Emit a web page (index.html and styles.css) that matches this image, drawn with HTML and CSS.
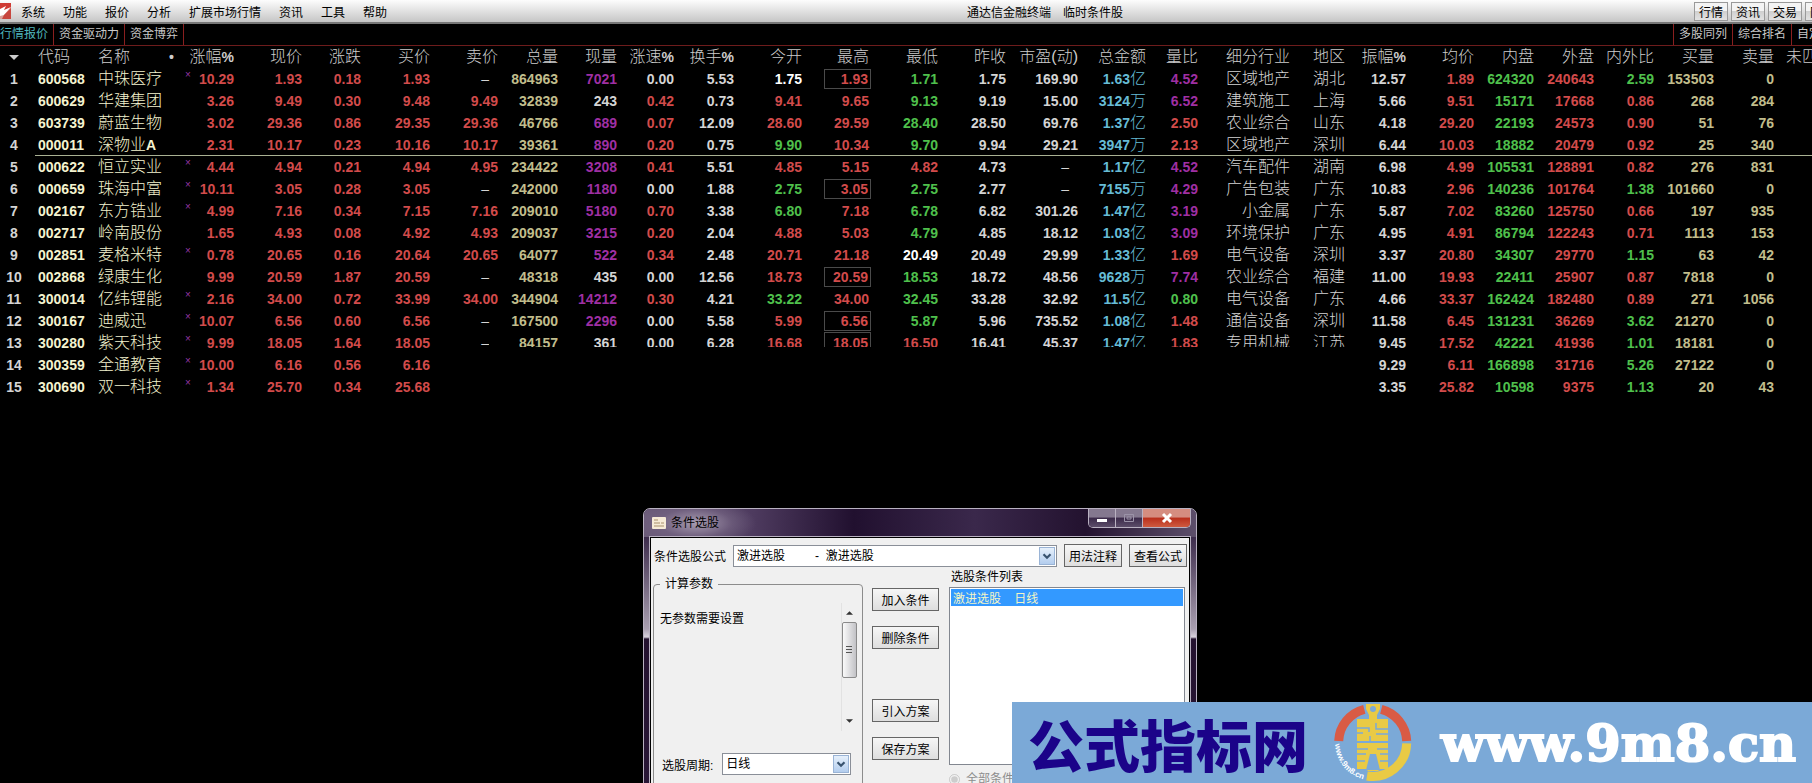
FILE: index.html
```html
<!DOCTYPE html>
<html lang="zh-CN">
<head>
    <meta charset="UTF-8">
    <meta name="viewport" content="width=device-width, initial-scale=1.0">
    <title>通达信金融终端</title>
    <link rel="stylesheet" href="styles.css">
</head>
<body>
    <header class="menu-bar">
        <svg class="app-icon" viewBox="0 0 11 16">
            <rect width="11" height="16" fill="#d9a09a"/>
            <path d="M0 0h11v5L5 9 0 8z" fill="#cf3b34"/>
            <path d="M0 6l6-3-2 4 7-3-7 8-4 1z" fill="#fff"/>
            <path d="M4 12l7-7v11H2z" fill="#c8473f"/>
        </svg>
        <nav class="menu">
            <a href="#">系统</a>
            <a href="#">功能</a>
            <a href="#">报价</a>
            <a href="#">分析</a>
            <a href="#">扩展市场行情</a>
            <a href="#">资讯</a>
            <a href="#">工具</a>
            <a href="#">帮助</a>
        </nav>
        <div class="app-title"><span>通达信金融终端</span><span>临时条件股</span></div>
        <div class="menu-buttons">
            <button>行情</button>
            <button>资讯</button>
            <button>交易</button>
            <button>网站</button>
        </div>
    </header>

    <nav class="tabs">
        <a href="#" class="active">行情报价</a>
        <a href="#">资金驱动力</a>
        <a href="#">资金博弈</a>
        <div class="tabs-right">
            <a href="#">多股同列</a>
            <a href="#">综合排名</a>
            <a href="#">自定</a>
        </div>
    </nav>

    <main>
        <table class="quotes">
            <colgroup id="cols"></colgroup>
            <thead><tr id="head"></tr></thead>
            <tbody id="rows"></tbody>
        </table>
    </main>

    <section class="dialog">
        <div class="dialog-title">
            <svg class="dialog-icon" viewBox="0 0 14 12">
                <rect width="14" height="12" rx="1" fill="#f6ead6"/>
                <path d="M2 3h4M2 6h6M2 9h10M9 6h3" stroke="#a8906c" stroke-width="1"/>
            </svg>
            <h2>条件选股</h2>
            <div class="window-buttons">
                <button aria-label="最小化"><svg viewBox="0 0 12 12"><path d="M1 7h10v3H1z" fill="#fff"/></svg></button>
                <button aria-label="最大化"><svg viewBox="0 0 12 12"><path d="M1.500 2.500h9v7h-9zM4 5h4v2H4z" fill="none" stroke="#9b93a8" stroke-width="1"/></svg></button>
                <button class="close" aria-label="关闭"><svg viewBox="0 0 12 12"><path d="M2 2l8 8M10 2l-8 8" stroke="#fff" stroke-width="3"/></svg></button>
            </div>
        </div>
        <div class="dialog-body">
            <div class="formula-row">
                <label for="formula">条件选股公式</label>
                <div class="combo formula">
                    <select id="formula"><option>激进选股&nbsp;&nbsp;&nbsp;&nbsp;&nbsp;&nbsp;&nbsp;&nbsp;&nbsp;-&nbsp; 激进选股</option></select>
                    <svg class="arrow" viewBox="0 0 16 18"><path d="M4 7l4 4 4-4" fill="none" stroke="#39536f" stroke-width="2.500"/></svg>
                </div>
                <button class="btn">用法注释</button>
                <button class="btn">查看公式</button>
            </div>
            <div class="dialog-cols">
                <fieldset class="params">
                    <legend>计算参数</legend>
                    <div class="params-area">
                        <p>无参数需要设置</p>
                        <div class="scrollbar">
                            <svg viewBox="0 0 8 4"><path d="M0 4l4-4 4 4z" fill="#333"/></svg>
                            <div class="thumb"></div>
                            <svg class="down" viewBox="0 0 8 4"><path d="M0 0l4 4 4-4z" fill="#333"/></svg>
                        </div>
                    </div>
                    <div class="period-row">
                        <label for="period">选股周期:</label>
                        <div class="combo">
                            <select id="period"><option>日线</option></select>
                            <svg class="arrow" viewBox="0 0 16 18"><path d="M4 7l4 4 4-4" fill="none" stroke="#39536f" stroke-width="2.500"/></svg>
                        </div>
                    </div>
                </fieldset>
                <div class="actions">
                    <button class="btn">加入条件</button>
                    <button class="btn">删除条件</button>
                    <button class="btn second">引入方案</button>
                    <button class="btn">保存方案</button>
                </div>
                <div class="conditions">
                    <label for="conditions">选股条件列表</label>
                    <select id="conditions" size="9">
                        <option selected>激进选股&nbsp;&nbsp;&nbsp;&nbsp;日线</option>
                    </select>
                    <label class="radio"><input type="radio" name="mode" checked disabled>全部条件相与</label>
                </div>
            </div>
        </div>
    </section>

    <aside class="banner">
        <strong class="banner-name">公式指标网</strong>
        <svg class="banner-logo" viewBox="0 0 78 79">
            <g fill="none" stroke-width="9">
                <path d="M4.700 38A34 34 0 0 1 30.300 6.400M47.300 6.400A34 34 0 0 1 72.700 38" stroke="#d95b45"/>
                <path d="M72.700 40.300A34 34 0 0 1 33 73" stroke="#e9ca45"/>
            </g>
            <path d="M32 1h14v5l-3 6v4h11v22H23V16h12v-4l-3-6z" fill="#e9ca45"/>
            <path d="M23 40h31v26h-8l-2 2H34l-2-2h-9z" fill="#e9ca45"/>
            <circle cx="39" cy="6" r="3" fill="#7ba9d7"/>
            <path d="M23 25h12v4M23 30h6M36 33v5M42 20v6h12M42 31h12M23 46h11M43 46h11M23 51h9M46 51h8M23 58h8M46 58h8" fill="none" stroke="#7ba9d7" stroke-width="1.500"/>
            <path d="M36 51h6l4 16H32z" fill="#7ba9d7"/>
            <path id="ring" d="M1 41A38 38 0 0 0 33 77" fill="none"/>
            <text class="ring-text"><textPath href="#ring">www.9m8.cn</textPath></text>
        </svg>
        <strong class="banner-url">www.9m8.cn</strong>
    </aside>

    <script src="script.js"></script>
</body>
</html>
```
FILE: styles.css
```css
* {
    box-sizing: border-box;
}
body {
    margin: 0;
    min-height: 100vh;
    position: relative;
    overflow: hidden;
    background: #000;
    color: #c8c8c8;
    font-family: "Liberation Sans", "Noto Sans CJK SC", sans-serif;
    font-size: 12px;
}
a {
    color: inherit;
    text-decoration: none;
    white-space: nowrap;
}
button, select, input {
    font: inherit;
    margin: 0;
    padding: 0;
}

/* menu */
.menu-bar {
    display: flex;
    align-items: center;
    height: 24px;
    color: #000;
    background: linear-gradient(#fdfdfd, #c6c6c6);
    border-bottom: 2px solid #777;
    overflow: hidden;
}
.app-icon {
    width: 11px;
    height: 16px;
}
.menu {
    display: flex;
    gap: 18px;
    margin-left: 10px;
}
.app-title {
    display: flex;
    gap: 12px;
    margin-left: 32%;
    white-space: nowrap;
}
.menu-buttons {
    display: flex;
    gap: 3px;
    margin-left: auto;
    margin-right: -27px;
}
.menu-buttons button {
    width: 34px;
    height: 19px;
    background: linear-gradient(#f4f4f4 45%, #d0d0d0 50%, #e2e2e2);
    border: 1px solid #999;
}

/* tabs */
.tabs {
    display: flex;
    height: 22px;
    line-height: 20px;
    border-bottom: 1px solid #6e1c1c;
    overflow: hidden;
}
.tabs a {
    padding: 0 5px;
    border-right: 1px solid #8a1f1f;
}
.tabs a.active {
    padding-left: 0;
    color: #4fb5bd;
}
.tabs-right {
    display: flex;
    margin-left: auto;
    margin-right: -15px;
    border-left: 1px solid #8a1f1f;
}

/* quotes */
.quotes {
    width: 100%;
    table-layout: fixed;
    border-collapse: collapse;
}
.quotes th, .quotes td {
    height: 22px;
    padding: 0 4px 0 0;
    line-height: 20px;
    text-align: right;
    white-space: nowrap;
    overflow: hidden;
}
.quotes th {
    color: #cdcdcd;
    font-size: 16px;
    font-weight: 300;
}
.quotes th b {
    font-size: 14px;
    font-weight: 700;
}
.quotes td {
    font-size: 14px;
    font-weight: bold;
}
.quotes td.cn, .quotes td i {
    font-size: 16px;
    font-style: normal;
    font-weight: 300;
}
.quotes td.cn b {
    font-size: 14px;
    font-weight: 700;
}
.quotes th.no, .quotes td.no {
    padding-right: 7px;
    text-align: center;
}
.quotes th.code, .quotes td.code {
    padding-left: 3px;
    text-align: left;
    overflow: visible;
}
.quotes th.name, .quotes td.name {
    padding-left: 4px;
    text-align: left;
}
.quotes th.last {
    padding-left: 8px;
    text-align: left;
}
.quotes td.name, .quotes td.code {
    color: #f4f3cf;
}
.name-head {
    display: flex;
    justify-content: space-between;
    padding-right: 2px;
}
.quotes td.mark {
    color: #9436a4;
    font-size: 10px;
    line-height: 14px;
    font-weight: normal;
    text-align: center;
    vertical-align: top;
    padding: 0;
}
.quotes tr.picked td:not(.no) {
    box-shadow: inset 0 -1px #a9b193;
}
.sort {
    width: 10px;
    height: 5px;
    vertical-align: middle;
}
.red { color: #d24b4b; }
.green { color: #4fc04c; }
.white { color: #fff; }
.gray { color: #d4d4d4; }
.yellow { color: #c1bd8c; }
.purple { color: #9f2fa3; }
.cyan { color: #66bcd6; }
.quotes td.dash {
    padding-right: 13px;
    font-weight: normal;
}
.quotes td.limit {
    padding-right: 2px;
}
.limit span {
    display: block;
    width: 47px;
    height: 20px;
    margin-left: auto;
    padding-right: 2px;
    line-height: 18px;
    border: 1px solid #4a4a4a;
}
.quotes td.cut {
    vertical-align: top;
}
.cut span {
    display: block;
    height: 15px;
    line-height: 22px;
    overflow: hidden;
}
.limit.cut span {
    border-bottom: 0;
    line-height: 20px;
}

/* dialog */
.dialog {
    position: absolute;
    left: 643px;
    top: 508px;
    width: 554px;
    padding: 0 6px;
    color: #000;
    background: linear-gradient(#4b3c5c, #3d2c4c 28px, #a99fb0 120px, #d8d2dc 128px, #24122f 130px, #2a1838);
    border: 1px solid #b9b1c1;
    border-radius: 7px 7px 0 0;
}
.dialog-title {
    display: flex;
    align-items: center;
    height: 28px;
    margin: 0 -6px;
    padding-left: 8px;
    border-radius: 6px 6px 0 0;
    background: radial-gradient(60px 24px at 52px 14px, #a79bb0, rgba(120, 104, 134, 0.6) 60%, transparent), linear-gradient(90deg, #6b5b79, #4d3a5e 20%, #21102f 38%, #3a284b 60%, #23122f 80%, #5d4f6b);
}
.dialog-icon {
    width: 14px;
    height: 12px;
}
.dialog-title h2 {
    margin: 0 0 0 5px;
    font-size: 12px;
    font-weight: normal;
    line-height: 24px;
}
.window-buttons {
    display: flex;
    align-self: flex-start;
    height: 19px;
    margin-left: auto;
    margin-right: 5px;
    border: 1px solid #b9b1c1;
    border-top: 0;
    border-radius: 0 0 5px 5px;
    overflow: hidden;
}
.window-buttons button {
    width: 27px;
    border: 0;
    border-right: 1px solid #b9b1c1;
    background: linear-gradient(#84788f 45%, #3b2a4a 50%, #5c4d69);
}
.window-buttons button.close {
    width: 47px;
    border-right: 0;
    background: linear-gradient(#d58d80 45%, #b92f1c 50%, #cf5a40);
}
.window-buttons svg {
    width: 12px;
    height: 12px;
    display: block;
    margin: 0 auto;
}
.dialog-body {
    padding: 6px 2px 24px 2px;
    background: #f0f0f0;
    border: 1px solid #000;
    outline: 1px solid #b9b1c1;
}
.formula-row {
    display: flex;
    align-items: center;
    gap: 7px;
}
.formula-row label {
    margin-left: 1px;
}
.btn {
    height: 23px;
    padding: 0 4px;
    background: linear-gradient(#f6f6f6, #dedede);
    border: 1px solid #666;
    white-space: nowrap;
}
.combo {
    position: relative;
    flex: 1;
    height: 22px;
}
.combo select {
    width: 100%;
    height: 22px;
    padding-left: 3px;
    appearance: none;
    color: #000;
    background: #fff;
    border: 1px solid #8a8f98;
    border-radius: 0;
}
.combo .arrow {
    position: absolute;
    right: 2px;
    top: 2px;
    width: 16px;
    height: 18px;
    background: linear-gradient(#e6f0fb, #b3cdee);
    border: 1px solid #9ab4d6;
    pointer-events: none;
}
.dialog-cols {
    display: flex;
    gap: 9px;
}
.params {
    width: 210px;
    min-width: 0;
    margin: 8px 0 0 0;
    padding: 0 6px 7px;
    border: 1px solid #8c8c8c;
    border-radius: 4px;
}
.params legend {
    padding: 0 5px;
    line-height: 18px;
}
.params-area {
    display: flex;
    justify-content: space-between;
    height: 128px;
    margin-top: 10px;
}
.params-area p {
    margin: 7px 0 0;
    line-height: 18px;
}
.scrollbar {
    display: flex;
    flex-direction: column;
    align-items: center;
    width: 15px;
    padding: 8px 0;
    border-left: 1px solid #e2e2e2;
}
.scrollbar svg {
    width: 7px;
    height: 4px;
}
.scrollbar .down {
    margin-top: auto;
}
.thumb {
    width: 15px;
    height: 56px;
    margin-top: 7px;
    border: 1px solid #8a8a8a;
    border-radius: 2px;
    background: repeating-linear-gradient(#555 0 1px, transparent 1px 3px) center / 6px 9px no-repeat, linear-gradient(90deg, #fafafa, #c2c2c6);
}
.period-row {
    display: flex;
    align-items: center;
    gap: 9px;
    margin: 22px 5px 0 2px;
}
.actions {
    display: flex;
    flex-direction: column;
    gap: 15px;
    width: 67px;
    padding-top: 21px;
}
.actions .second {
    margin-top: 35px;
}
.conditions {
    flex: 1;
    display: flex;
    flex-direction: column;
    padding-left: 1px;
    padding-right: 2px;
}
.conditions > label {
    line-height: 20px;
    padding-left: 2px;
}
.conditions select {
    height: 178px;
    background: #fff;
    padding: 1px;
    border: 1px solid #828790;
    border-radius: 0;
    overflow: hidden;
}
.conditions option {
    min-height: 16px;
    padding: 0 2px;
    line-height: 16px;
}
.conditions option:checked {
    background: linear-gradient(#3399ff, #3399ff);
    -webkit-text-fill-color: #f4f5c4;
}
.conditions .radio {
    display: flex;
    align-items: center;
    gap: 6px;
    margin-top: 4px;
    padding-left: 0;
    color: #8d8d8d;
}
.radio input {
    width: 11px;
    height: 11px;
}

/* site banner */
.banner {
    position: absolute;
    right: 0;
    bottom: 0;
    display: flex;
    align-items: center;
    width: 800px;
    height: 81px;
    padding-left: 16px;
    background: #7ba9d7;
    white-space: nowrap;
}
.banner-name {
    color: #1b0389;
    font-family: "Noto Sans CJK SC", sans-serif;
    font-size: 56px;
    font-weight: 900;
    line-height: 76px;
}
.banner-logo {
    width: 78px;
    height: 79px;
    margin-left: 26px;
}
.ring-text {
    fill: #fff;
    font-size: 8px;
    font-weight: bold;
}
.banner-url {
    margin-left: 29px;
    color: #fff;
    font-family: "DejaVu Serif", serif;
    font-size: 51px;
    line-height: 70px;
    -webkit-text-stroke: 2px #fff;
}
```
FILE: script.js
```javascript
const widths = [35, 59, 86, 16, 42, 68, 59, 69, 68, 60, 59, 57, 60, 68, 67, 69, 68, 72, 68, 52, 92, 55, 61, 68, 60, 60, 60, 60, 60];

const heads = ["涨幅%", "现价", "涨跌", "买价", "卖价", "总量", "现量", "涨速%", "换手%", "今开", "最高", "最低", "昨收", "市盈(动)", "总金额", "量比", "细分行业", "地区", "振幅%", "均价", "内盘", "外盘", "内外比", "买量", "卖量"];

// code, name, mark, then one value for each of the heads
const stocks = [
    "600568 中珠医疗 × 10.29 1.93 0.18 1.93 – 864963 7021 0.00 5.53 1.75 1.93 1.71 1.75 169.90 1.63亿 4.52 区域地产 湖北 12.57 1.89 624320 240643 2.59 153503 0",
    "600629 华建集团 _ 3.26 9.49 0.30 9.48 9.49 32839 243 0.42 0.73 9.41 9.65 9.13 9.19 15.00 3124万 6.52 建筑施工 上海 5.66 9.51 15171 17668 0.86 268 284",
    "603739 蔚蓝生物 _ 3.02 29.36 0.86 29.35 29.36 46766 689 0.07 12.09 28.60 29.59 28.40 28.50 69.76 1.37亿 2.50 农业综合 山东 4.18 29.20 22193 24573 0.90 51 76",
    "000011 深物业A _ 2.31 10.17 0.23 10.16 10.17 39361 890 0.20 0.75 9.90 10.34 9.70 9.94 29.21 3947万 2.13 区域地产 深圳 6.44 10.03 18882 20479 0.92 25 340",
    "000622 恒立实业 × 4.44 4.94 0.21 4.94 4.95 234422 3208 0.41 5.51 4.85 5.15 4.82 4.73 – 1.17亿 4.52 汽车配件 湖南 6.98 4.99 105531 128891 0.82 276 831",
    "000659 珠海中富 × 10.11 3.05 0.28 3.05 – 242000 1180 0.00 1.88 2.75 3.05 2.75 2.77 – 7155万 4.29 广告包装 广东 10.83 2.96 140236 101764 1.38 101660 0",
    "002167 东方锆业 × 4.99 7.16 0.34 7.15 7.16 209010 5180 0.70 3.38 6.80 7.18 6.78 6.82 301.26 1.47亿 3.19 小金属 广东 5.87 7.02 83260 125750 0.66 197 935",
    "002717 岭南股份 _ 1.65 4.93 0.08 4.92 4.93 209037 3215 0.20 2.04 4.88 5.03 4.79 4.85 18.12 1.03亿 3.09 环境保护 广东 4.95 4.91 86794 122243 0.71 1113 153",
    "002851 麦格米特 × 0.78 20.65 0.16 20.64 20.65 64077 522 0.34 2.48 20.71 21.18 20.49 20.49 29.99 1.33亿 1.69 电气设备 深圳 3.37 20.80 34307 29770 1.15 63 42",
    "002868 绿康生化 _ 9.99 20.59 1.87 20.59 – 48318 435 0.00 12.56 18.73 20.59 18.53 18.72 48.56 9628万 7.74 农业综合 福建 11.00 19.93 22411 25907 0.87 7818 0",
    "300014 亿纬锂能 × 2.16 34.00 0.72 33.99 34.00 344904 14212 0.30 4.21 33.22 34.00 32.45 33.28 32.92 11.5亿 0.80 电气设备 广东 4.66 33.37 162424 182480 0.89 271 1056",
    "300167 迪威迅 × 10.07 6.56 0.60 6.56 – 167500 2296 0.00 5.58 5.99 6.56 5.87 5.96 735.52 1.08亿 1.48 通信设备 深圳 11.58 6.45 131231 36269 3.62 21270 0",
    "300280 紫天科技 × 9.99 18.05 1.64 18.05 – 84157 361 0.00 6.28 16.68 18.05 16.50 16.41 45.37 1.47亿 1.83 专用机械 江苏 9.45 17.52 42221 41936 1.01 18181 0",
    "300359 全通教育 × 10.00 6.16 0.56 6.16 _ _ _ _ _ _ _ _ _ _ _ _ _ _ 9.29 6.11 166898 31716 5.26 27122 0",
    "300690 双一科技 × 1.34 25.70 0.34 25.68 _ _ _ _ _ _ _ _ _ _ _ _ _ _ 3.35 25.82 10598 9375 1.13 20 43"
];

function colorOf(head, value, close) {
    let n = parseFloat(value);
    if (value === "–") return "gray dash";
    if (head === "今开" || head === "最低") {
        return n > close ? "red" : n < close ? "green" : "white";
    }
    if (head === "现量") return n >= 500 ? "purple" : "gray";
    if (head === "涨速%") return n > 0 ? "red" : "gray";
    if (head === "量比") return n >= 3 ? "purple" : n >= 1 ? "red" : "green";
    if (head === "内外比") return n > 1 ? "green" : "red";
    if (head === "内盘") return "green";
    if (head === "总金额") return "cyan";
    if (["总量", "买量", "卖量"].includes(head)) return "yellow";
    if (["细分行业", "地区"].includes(head)) return "gray cn";
    if (["换手%", "昨收", "市盈(动)", "振幅%"].includes(head)) return "gray";
    return "red";
}

document.getElementById("cols").innerHTML = widths.map(w => `<col style="width:${w}px">`).join("") + "<col>";

document.getElementById("head").innerHTML =
    '<th class="no"><svg class="sort" viewBox="0 0 10 5"><path d="M0 0h10L5 5z" fill="#ccc"/></svg></th>' +
    '<th class="code">代码</th><th class="name"><div class="name-head">名称<b>•</b></div></th>' +
    heads.map((h, i) => `<th${i === 0 ? ' colspan="2"' : ""}>${h.replace("%", "<b>%</b>")}</th>`).join("") +
    '<th class="last">未匹</th>';

document.getElementById("rows").innerHTML = stocks.map((line, r) => {
    let [code, name, mark, ...values] = line.split(" ");
    let close = parseFloat(values[12]);
    let cells = values.map((value, i) => {
        if (value === "_") return "<td></td>";
        let cls = colorOf(heads[i], value, close);
        if (heads[i] === "最高" && values[4] === "–") cls += " limit";
        if (r === 12 && i >= 4 && i <= 17) cls += " cut";
        return `<td class="${cls}"><span>${value.replace(/[亿万]/, "<i>$&</i>")}</span></td>`;
    }).join("");
    return `<tr${r === 3 ? ' class="picked"' : ""}><td class="no gray">${r + 1}</td><td class="code">${code}</td>` +
        `<td class="name cn">${name.replace("A", "<b>A</b>")}</td><td class="mark">${mark.replace("_", "")}</td>${cells}<td></td></tr>`;
}).join("");
```
